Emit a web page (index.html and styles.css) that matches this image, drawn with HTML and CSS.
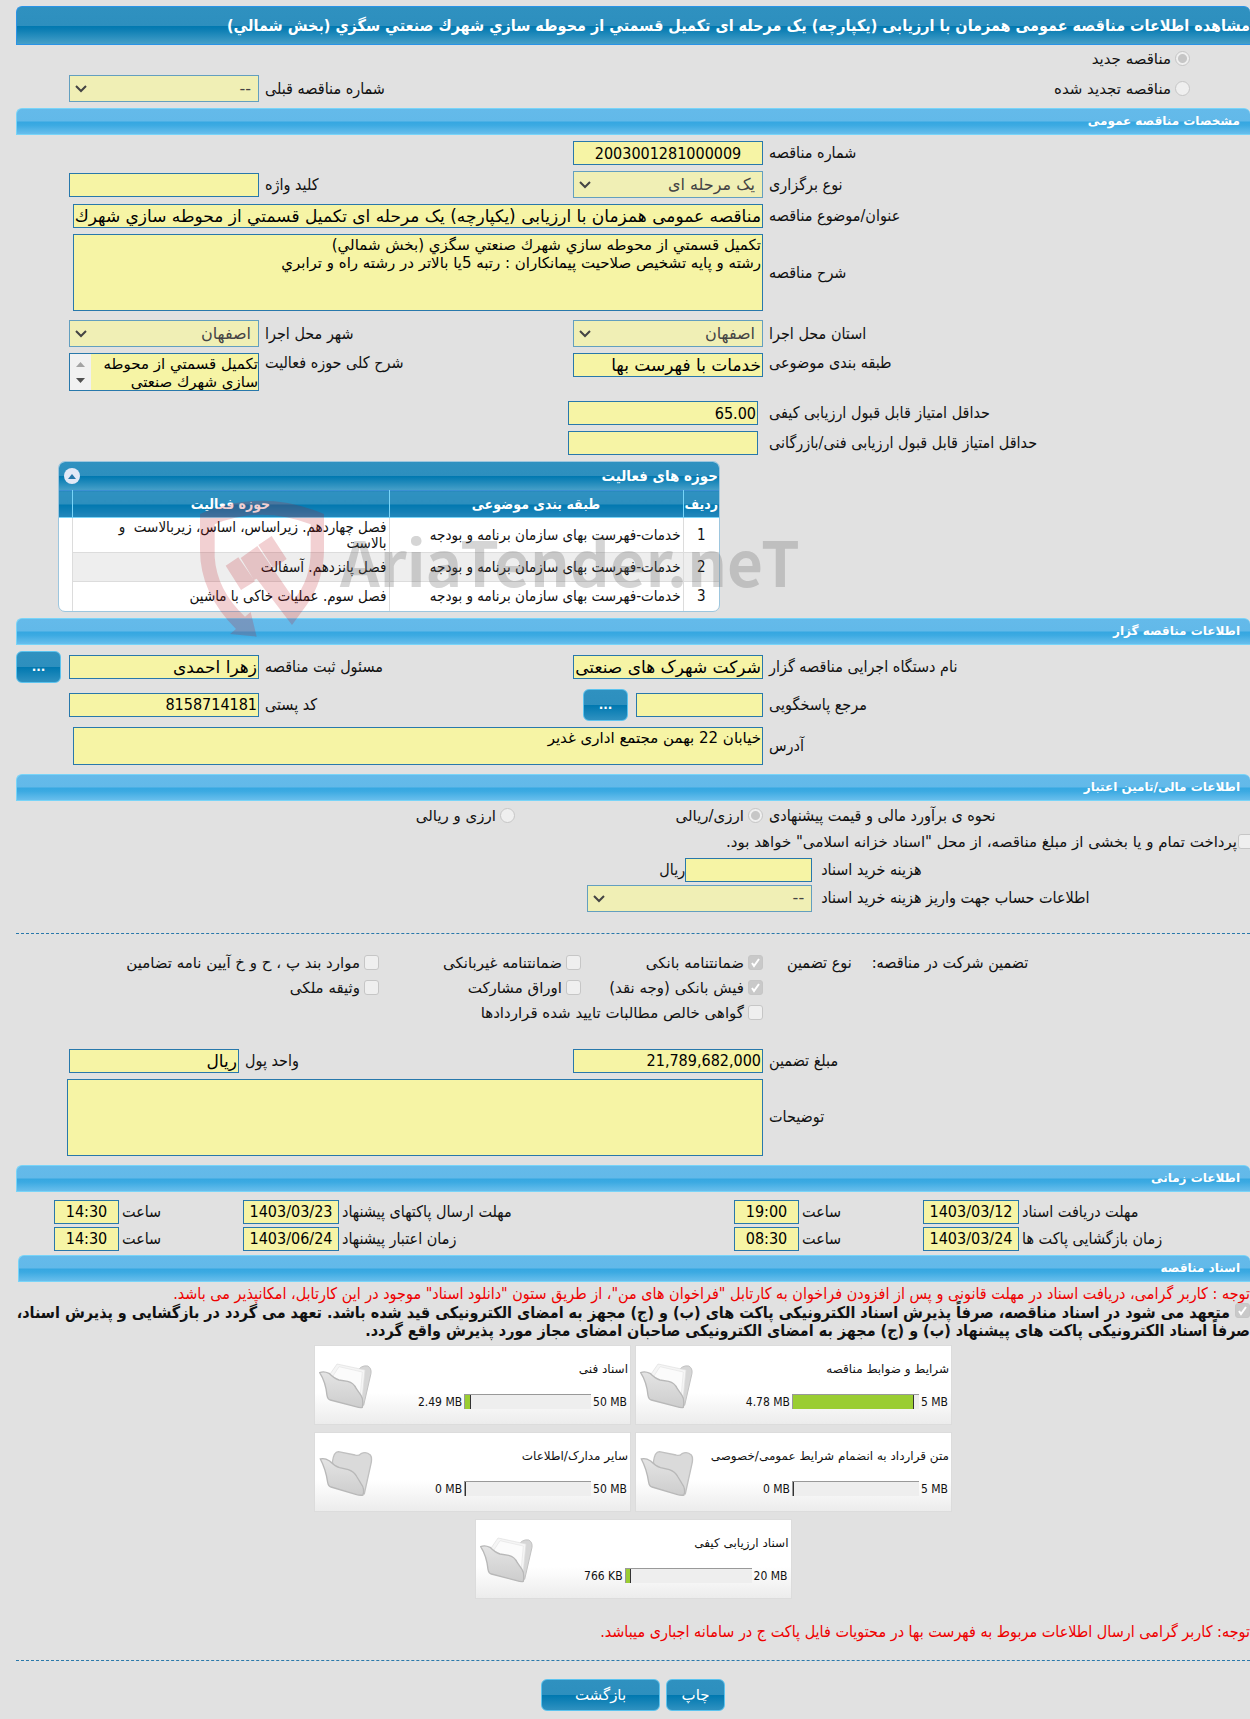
FILE: index.html
```html
<!DOCTYPE html>
<html lang="fa" dir="rtl">
<head>
  <meta charset="utf-8">
  <title>مشاهده اطلاعات مناقصه</title>
  <link rel="stylesheet" href="styles.css">
</head>
<body>

  <!-- folder icons used by the document cards -->
  <svg class="defs" width="0" height="0">
    <defs>
      <linearGradient id="folderFill" x1="0" y1="0" x2="0" y2="1">
        <stop offset="0" stop-color="#e4e4e4"/>
        <stop offset="1" stop-color="#cdcdcd"/>
      </linearGradient>
      <symbol id="folder-full" viewBox="0 0 162 144">
        <path d="M112 34 Q124 8 146 12 Q158 18 156 34 L134 130 L60 60 Z" fill="#d6d6d6" stroke="#c2c2c2" stroke-width="3"/>
        <path d="M32 38 L54 6 L138 24 L130 104 L110 96 Z" fill="#f5f5f5" stroke="#dedede" stroke-width="2"/>
        <path d="M42 42 L60 14 L130 30 L124 96" fill="#fbfbfb" stroke="#e4e4e4" stroke-width="2"/>
        <path d="M2 32 Q14 26 30 34 Q46 50 60 54 L86 58 Q104 62 112 80 L126 100 Q134 112 130 136 Q124 138 110 134 L34 114 Q26 112 24 100 Q20 60 2 32 Z" fill="url(#folderFill)" stroke="#b8b8b8" stroke-width="4"/>
      </symbol>
      <symbol id="folder-empty" viewBox="0 0 162 144">
        <path d="M40 40 Q44 8 58 8 L108 18 Q118 22 126 14 Q142 6 154 18 Q160 26 156 44 L136 134 L60 90 Z" fill="#dadada" stroke="#c0c0c0" stroke-width="4"/>
        <path d="M4 30 Q16 26 32 36 Q48 52 62 56 L88 62 Q106 68 114 84 L126 104 Q138 120 132 138 Q124 140 110 136 L36 114 Q28 112 26 100 Q20 60 4 30 Z" fill="url(#folderFill)" stroke="#b8b8b8" stroke-width="4"/>
      </symbol>
    </defs>
  </svg>

  <main class="page">
    <h1 class="title">مشاهده اطلاعات مناقصه عمومی همزمان با ارزیابی (یکپارچه) یک مرحله ای تکمیل قسمتي از محوطه سازي شهرك صنعتي سگزي (بخش شمالي)</h1>

    <div class="row top-row">
      <label class="choice"><input type="radio" name="kind" checked disabled>مناقصه جدید</label>
    </div>
    <div class="row top-row">
      <label class="choice"><input type="radio" name="kind" disabled>مناقصه تجدید شده</label>
      <span></span>
      <label class="lbl" for="prev">شماره مناقصه قبلی</label>
      <select id="prev" class="field" disabled><option>--</option></select>
    </div>

    <h2 class="bar">مشخصات مناقصه عمومی</h2>

    <div class="row">
      <label class="lbl" for="number">شماره مناقصه</label>
      <input id="number" class="field center" type="text" value="2003001281000009" readonly>
    </div>
    <div class="row">
      <label class="lbl" for="type">نوع برگزاری</label>
      <select id="type" class="field" disabled><option>یک مرحله ای</option></select>
      <label class="lbl" for="keyword">کلید واژه</label>
      <input id="keyword" class="field" type="text" readonly>
    </div>
    <div class="row">
      <label class="lbl" for="subject">عنوان/موضوع مناقصه</label>
      <div class="wide"><input id="subject" class="field strong" type="text" value="مناقصه عمومی همزمان با ارزیابی (یکپارچه) یک مرحله ای تکمیل قسمتي از محوطه سازي شهرك صنعتي سگزي (بخش شمالي)" readonly></div>
    </div>
    <div class="row">
      <label class="lbl" for="desc">شرح مناقصه</label>
      <div class="wide"><textarea id="desc" class="field tall" readonly>تکمیل قسمتي از محوطه سازي شهرك صنعتي سگزي (بخش شمالي)
رشته و پایه تشخیص صلاحیت پیمانکاران : رتبه 5یا بالاتر در رشته راه و ترابري</textarea></div>
    </div>
    <div class="row spaced">
      <label class="lbl" for="province">استان محل اجرا</label>
      <select id="province" class="field" disabled><option>اصفهان</option></select>
      <label class="lbl" for="city">شهر محل اجرا</label>
      <select id="city" class="field" disabled><option>اصفهان</option></select>
    </div>
    <div class="row top">
      <label class="lbl" for="category">طبقه بندی موضوعی</label>
      <input id="category" class="field strong" type="text" value="خدمات با فهرست بها" readonly>
      <label class="lbl" for="scope">شرح کلی حوزه فعالیت</label>
      <textarea id="scope" class="field scroller" readonly>تکمیل قسمتي از محوطه سازي شهرك صنعتي</textarea>
    </div>
    <div class="row spaced score">
      <label class="lbl" for="minq">حداقل امتیاز قابل قبول ارزیابی کیفی</label>
      <input id="minq" class="field" type="text" value="65.00" readonly>
    </div>
    <div class="row score">
      <label class="lbl" for="mint">حداقل امتیاز قابل قبول ارزیابی فنی/بازرگانی</label>
      <input id="mint" class="field" type="text" readonly>
    </div>

    <section class="grid-box">
      <div class="grid-head">
        <span>حوزه های فعالیت</span>
        <button class="collapse" type="button" aria-label="بستن"></button>
      </div>
      <table class="grid">
        <thead>
          <tr><th class="c-num">ردیف</th><th class="c-cat">طبقه بندی موضوعی</th><th>حوزه فعالیت</th><th class="c-end"></th></tr>
        </thead>
        <tbody>
          <tr class="two"><td class="num">1</td><td>خدمات-فهرست بهای سازمان برنامه و بودجه</td><td>فصل چهاردهم. زیراساس، اساس، زیربالاست &nbsp;و<br>بالاست</td><td></td></tr>
          <tr class="alt"><td class="num">2</td><td>خدمات-فهرست بهای سازمان برنامه و بودجه</td><td>فصل پانزدهم. آسفالت</td><td></td></tr>
          <tr><td class="num">3</td><td>خدمات-فهرست بهای سازمان برنامه و بودجه</td><td>فصل سوم. عملیات خاکی با ماشین</td><td></td></tr>
        </tbody>
      </table>
      <div class="watermark">
        <svg viewBox="0 0 420 450" width="140" height="150">
          <path d="M30 72 Q215 -8 402 72 V180 Q402 270 350 345 L306 405 L200 266 L192 270 L152 204 L202 168 L312 328 Q362 270 362 180 V103 Q215 45 74 103 V200 Q80 300 165 380 L182 366 L200 440 L120 432 L138 417 Q30 310 30 180 Z"/>
          <path d="M107 227 L145 202 L195 274 L153 300 Z M205 165 L245 138 L290 207 L250 235 Z"/>
        </svg>
        <span>AriaTender.neT</span>
      </div>
    </section>

    <h2 class="bar">اطلاعات مناقصه گزار</h2>

    <div class="row org">
      <label class="lbl" for="org">نام دستگاه اجرایی مناقصه گزار</label>
      <input id="org" class="field strong" type="text" value="شرکت شهرک های صنعتی" readonly>
      <label class="lbl" for="owner">مسئول ثبت مناقصه</label>
      <div class="with-btn"><input id="owner" class="field strong" type="text" value="زهرا احمدی" readonly><button class="btn dots" type="button">...</button></div>
    </div>
    <div class="row org">
      <label class="lbl" for="contact">مرجع پاسخگویی</label>
      <div class="with-btn"><input id="contact" class="field mid" type="text" readonly><button class="btn dots" type="button">...</button></div>
      <label class="lbl" for="postal">کد پستی</label>
      <input id="postal" class="field" type="text" value="8158714181" readonly>
    </div>
    <div class="row">
      <label class="lbl" for="address">آدرس</label>
      <div class="wide"><textarea id="address" class="field short" readonly>خیابان 22 بهمن مجتمع اداری غدیر</textarea></div>
    </div>

    <h2 class="bar after-area">اطلاعات مالی/تامین اعتبار</h2>

    <div class="row money">
      <span class="lbl">نحوه ی برآورد مالی و قیمت پیشنهادی</span>
      <div class="wide radios">
        <label class="choice"><input type="radio" name="currency" checked disabled>ارزی/ریالی</label>
        <label class="choice"><input type="radio" name="currency" disabled>ارزی و ریالی</label>
      </div>
    </div>
    <label class="choice treasury"><input type="checkbox" disabled>پرداخت تمام و یا بخشی از مبلغ مناقصه، از محل "اسناد خزانه اسلامی" خواهد بود.</label>
    <div class="cost">
      <label class="lbl" for="price">هزینه خرید اسناد</label>
      <div class="with-unit"><input id="price" class="field mid" type="text" readonly>ریال</div>
      <label class="lbl" for="account">اطلاعات حساب جهت واریز هزینه خرید اسناد</label>
      <select id="account" class="field" disabled><option>--</option></select>
    </div>

    <hr>

    <div class="guarantee">
      <div class="heads"><span>تضمین شرکت در مناقصه:</span><span>نوع تضمین</span></div>
      <div class="checks">
        <label class="choice"><input type="checkbox" checked disabled>ضمانتنامه بانکی</label>
        <label class="choice"><input type="checkbox" disabled>ضمانتنامه غیربانکی</label>
        <label class="choice"><input type="checkbox" disabled>موارد بند پ ، ح و خ آیین نامه تضامین</label>
        <label class="choice"><input type="checkbox" checked disabled>فیش بانکی (وجه نقد)</label>
        <label class="choice"><input type="checkbox" disabled>اوراق مشارکت</label>
        <label class="choice"><input type="checkbox" disabled>وثیقه ملکی</label>
        <label class="choice long"><input type="checkbox" disabled>گواهی خالص مطالبات تایید شده قراردادها</label>
      </div>
    </div>

    <div class="row amount">
      <label class="lbl" for="amount">مبلغ تضمین</label>
      <input id="amount" class="field" type="text" value="21,789,682,000" readonly>
      <div class="unit">
        <label class="lbl" for="unit">واحد پول</label>
        <input id="unit" class="field strong" type="text" value="ریال" readonly>
      </div>
    </div>
    <div class="row">
      <label class="lbl" for="notes">توضیحات</label>
      <div class="wide notes"><textarea id="notes" class="field tall" readonly></textarea></div>
    </div>

    <h2 class="bar after-area">اطلاعات زمانی</h2>

    <div class="times">
      <label class="lbl" for="d1">مهلت دریافت اسناد</label><input id="d1" class="field center" type="text" value="1403/03/12" readonly>
      <label class="lbl" for="t1">ساعت</label><input id="t1" class="field center" type="text" value="19:00" readonly>
      <label class="lbl" for="d2">مهلت ارسال پاکتهای پیشنهاد</label><input id="d2" class="field center" type="text" value="1403/03/23" readonly>
      <label class="lbl" for="t2">ساعت</label><input id="t2" class="field center" type="text" value="14:30" readonly>
      <label class="lbl" for="d3">زمان بازگشایی پاکت ها</label><input id="d3" class="field center" type="text" value="1403/03/24" readonly>
      <label class="lbl" for="t3">ساعت</label><input id="t3" class="field center" type="text" value="08:30" readonly>
      <label class="lbl" for="d4">زمان اعتبار پیشنهاد</label><input id="d4" class="field center" type="text" value="1403/06/24" readonly>
      <label class="lbl" for="t4">ساعت</label><input id="t4" class="field center" type="text" value="14:30" readonly>
    </div>

    <h2 class="bar docs">اسناد مناقصه</h2>

    <p class="note">توجه : کاربر گرامی، دریافت اسناد در مهلت قانونی و پس از افزودن فراخوان به کارتابل "فراخوان های من"، از طریق ستون "دانلود اسناد" موجود در این کارتابل، امکانپذیر می باشد.</p>
    <label class="pledge"><input type="checkbox" checked disabled> متعهد می شود در اسناد مناقصه، صرفاً پذیرش اسناد الکترونیکی پاکت های (ب) و (ج) مجهز به امضای الکترونیکی قید شده باشد. تعهد می گردد در بازگشایی و پذیرش اسناد، صرفاً اسناد الکترونیکی پاکت های پیشنهاد (ب) و (ج) مجهز به امضای الکترونیکی صاحبان امضای مجاز مورد پذیرش واقع گردد.</label>

    <div class="cards">
      <article class="card">
        <svg class="folder"><use href="#folder-full"/></svg>
        <h3>شرایط و ضوابط مناقصه</h3>
        <div class="usage"><span>4.78 MB</span><div class="meter"><i style="width: 96%"></i></div><span>5 MB</span></div>
      </article>
      <article class="card">
        <svg class="folder"><use href="#folder-full"/></svg>
        <h3>اسناد فنی</h3>
        <div class="usage"><span>2.49 MB</span><div class="meter"><i style="width: 5%"></i></div><span>50 MB</span></div>
      </article>
      <article class="card">
        <svg class="folder"><use href="#folder-empty"/></svg>
        <h3>متن قرارداد به انضمام شرایط عمومی/خصوصی</h3>
        <div class="usage"><span>0 MB</span><div class="meter"><i style="width: 0%"></i></div><span>5 MB</span></div>
      </article>
      <article class="card">
        <svg class="folder"><use href="#folder-empty"/></svg>
        <h3>سایر مدارک/اطلاعات</h3>
        <div class="usage"><span>0 MB</span><div class="meter"><i style="width: 0%"></i></div><span>50 MB</span></div>
      </article>
      <article class="card">
        <svg class="folder"><use href="#folder-full"/></svg>
        <h3>اسناد ارزیابی کیفی</h3>
        <div class="usage"><span>766 KB</span><div class="meter"><i style="width: 4%"></i></div><span>20 MB</span></div>
      </article>
    </div>

    <p class="note last">توجه: کاربر گرامی ارسال اطلاعات مربوط به فهرست بها در محتویات فایل پاکت ج در سامانه اجباری میباشد.</p>

    <hr class="end">

    <div class="actions">
      <button class="btn print" type="button">چاپ</button>
      <button class="btn back" type="button">بازگشت</button>
    </div>
  </main>

</body>
</html>
```
FILE: styles.css
```css
* {
  box-sizing: border-box;
}

body {
  margin: 0;
  background: #e1e1e1;
  color: #111;
  font-family: "DejaVu Sans Condensed", "DejaVu Sans", sans-serif;
  font-size: 16px;
  line-height: 18px;
}

.defs {
  position: absolute;
}

.page {
  padding: 6px 0 6px 16px;
}

h1, h2, h3, p {
  margin: 0;
}

/* headings */
.title {
  height: 39px;
  line-height: 37px;
  border: 1px solid #2a93e6;
  border-right: 0;
  border-radius: 6px 6px 0 0;
  background: linear-gradient(#2f91c0, #2d8fbe 50%, #0078b0 51%, #0a7db3 60%, #469fc8);
  color: #fff;
  font-size: 16px;
  white-space: nowrap;
  overflow: hidden;
}

.bar {
  height: 27px;
  margin-top: 6px;
  padding-right: 10px;
  border: 1px solid #78d4f8;
  border-right: 0;
  border-radius: 6px 6px 0 0;
  background: linear-gradient(#64baea, #62b9e9 48%, #35a7e1 52%, #3caae2 65%, #68beec);
  color: #fff;
  font-family: "DejaVu Sans", sans-serif;
  font-size: 12px;
  line-height: 25px;
}

.bar.after-area {
  margin-top: 9px;
}

/* form rows: label, field, label, field */
.row {
  display: grid;
  grid-template-columns: 481fr 190px 302fr 243px;
  column-gap: 6px;
  align-items: center;
  margin-top: 6px;
}

.row.spaced {
  margin-top: 9px;
}

.row.top {
  align-items: start;
}

.row.top .lbl {
  padding-top: 1px;
}

.lbl {
  text-align: left;
  white-space: nowrap;
}

.wide {
  grid-column: 2 / 5;
  padding-left: 57px;
}

.wide.notes {
  padding-left: 51px;
}

.top-row {
  margin-top: 3px;
  min-height: 27px;
}

.title + .top-row {
  margin-top: 0;
}

.top-row .choice {
  padding-right: 60px;
}

/* fields */
.field {
  display: block;
  width: 190px;
  height: 24px;
  margin: 0;
  padding: 0 1px;
  border: 1px solid #2878ab;
  border-radius: 0;
  background: #f6f4a5;
  color: #000;
  font-family: "DejaVu Sans Condensed", "DejaVu Sans", sans-serif;
  font-size: 16px;
  line-height: 22px;
  outline: none;
}

.wide .field {
  width: 100%;
}

.center {
  text-align: center;
}

.field.strong {
  font-family: "DejaVu Sans", sans-serif;
  font-size: 17px;
}

select.field {
  height: 27px;
  padding: 0 7px;
  appearance: none;
  border-color: #639fbf;
  background: #f0efb5 url("data:image/svg+xml,%3Csvg xmlns='http://www.w3.org/2000/svg' width='12' height='8'%3E%3Cpath d='M1 1 L6 6 L11 1' fill='none' stroke='%23444' stroke-width='2'/%3E%3C/svg%3E") no-repeat 5px 9px;
  color: #444;
  font-family: "DejaVu Sans", sans-serif;
  opacity: 1;
}

textarea.field {
  padding: 1px;
  font-family: "DejaVu Sans", sans-serif;
  font-size: 15px;
  line-height: 18px;
  resize: none;
  overflow: hidden;
}

textarea.tall {
  height: 77px;
}

textarea.short {
  height: 38px;
}

textarea.scroller {
  height: 38px;
  padding: 1px 0 0 22px;
  background: url("data:image/svg+xml,%3Csvg xmlns='http://www.w3.org/2000/svg' width='21' height='36'%3E%3Crect width='21' height='36' fill='%23f1f1f1'/%3E%3Cpath d='M6 13 L10.500 8 L15 13Z' fill='%23a3a3a3'/%3E%3Cpath d='M6 24 L10.500 29 L15 24Z' fill='%23505050'/%3E%3C/svg%3E") no-repeat left top, #f6f4a5;
}

.mid,
.with-btn .mid {
  width: 127px;
}

.score .field {
  margin-right: 5px;
}

.row.spaced.score {
  margin-top: 10px;
}

/* radios and tick boxes */
.choice {
  display: flex;
  align-items: center;
  gap: 4px;
  font-family: "DejaVu Sans", sans-serif;
  font-size: 15px;
  white-space: nowrap;
}

input[type="radio"],
input[type="checkbox"] {
  flex: none;
  appearance: none;
  width: 15px;
  height: 15px;
  margin: 0;
  border: 1px solid #c6c6c6;
  background: #efefef;
}

input[type="radio"] {
  border-radius: 50%;
}

input[type="checkbox"] {
  border-radius: 3px;
}

input[type="radio"]:checked {
  background: radial-gradient(circle, #c6c6c6 4px, #efefef 5px);
}

input[type="checkbox"]:checked {
  background: #c9c9c9 url("data:image/svg+xml,%3Csvg xmlns='http://www.w3.org/2000/svg' width='13' height='13'%3E%3Cpath d='M3 7 L5 10 L10 3' fill='none' stroke='%23fff' stroke-width='2'/%3E%3C/svg%3E") no-repeat center;
}

/* activity grid */
.grid-box {
  position: relative;
  width: 662px;
  max-width: 100%;
  margin: 6px auto 0 42px;
  border: 1px solid #9dc6de;
  border-radius: 7px;
  background: #fff;
}

.grid-head {
  display: flex;
  align-items: center;
  justify-content: space-between;
  height: 28px;
  padding: 0 1px 0 5px;
  border-radius: 6px 6px 0 0;
  background: linear-gradient(#2f91c0, #2d8fbe 50%, #0078b0 51%, #469fc8);
  color: #fff;
  font-size: 15px;
  font-weight: bold;
}

.collapse {
  width: 16px;
  height: 16px;
  padding: 0;
  border: 0;
  border-radius: 50%;
  background: #e3e9f7 url("data:image/svg+xml,%3Csvg xmlns='http://www.w3.org/2000/svg' width='8' height='5'%3E%3Cpath d='M0 5 L4 0 L8 5Z' fill='%232878ab'/%3E%3C/svg%3E") no-repeat center;
}

.grid {
  width: 100%;
  table-layout: fixed;
  border-collapse: collapse;
  font-size: 15px;
  line-height: 16px;
}

.grid th {
  height: 27px;
  padding: 0;
  border-left: 1px solid #78d4f8;
  border-top: 1px solid #3b8fd2;
  border-bottom: 1px solid #78d4f8;
  background: linear-gradient(#2f91c0, #2d8fbe 48%, #0078b0 50%, #2487bb);
  color: #fff;
  font-size: 14px;
}

.grid td {
  height: 29px;
  padding: 0 2px;
  border-left: 1px solid #dcdcdc;
  border-bottom: 1px solid #dcdcdc;
}

.grid .two td {
  height: 35px;
}

.grid th:last-child,
.grid td:last-child {
  border-left: 0;
}

.grid td:last-child {
  border-bottom: 0;
  background: #fff;
}

.grid tbody tr:last-child td {
  border-bottom: 0;
  background: transparent;
}

.grid .alt td:not(:last-child) {
  background: #eee;
}

.grid .num {
  text-align: center;
}

.c-num { width: 36px; }
.c-cat { width: 294px; }
.c-end { width: 13px; }

.watermark {
  position: absolute;
  left: 131px;
  top: 28px;
  display: flex;
  direction: ltr;
  pointer-events: none;
}

.watermark svg {
  fill: rgba(190, 20, 30, 0.2);
}

.watermark span {
  margin-left: 10px;
  color: rgba(100, 100, 100, 0.27);
  font: bold 62px/140px "Noto Sans CJK SC", sans-serif;
  white-space: nowrap;
}

/* organiser */
.org {
  min-height: 32px;
}

.with-btn {
  display: flex;
  align-items: center;
  gap: 8px;
}

.btn {
  height: 32px;
  padding: 0;
  border: 1px solid #5cc3ee;
  border-radius: 6px;
  background: linear-gradient(#2f91c0, #2d8fbe 50%, #0078b0 51%, #2f91c0);
  color: #fff;
  font-family: "DejaVu Sans", sans-serif;
  font-size: 15px;
}

.dots {
  width: 45px;
  font-size: 12px;
  font-weight: bold;
}

/* money */
.radios {
  display: grid;
  grid-template-columns: 248px 1fr;
}

.treasury {
  gap: 1px;
  margin-top: 8px;
  margin-right: -3px;
}

.cost {
  display: grid;
  grid-template-columns: 432fr 802fr;
  column-gap: 9px;
  row-gap: 3px;
  align-items: center;
  margin-top: 7px;
}

.cost select {
  width: 225px;
}

.with-unit {
  display: flex;
  align-items: center;
}

hr {
  margin: 21px 0 0;
  border: 0;
  border-top: 1px dashed #2878ab;
}

.guarantee {
  display: grid;
  grid-template-columns: 481fr 190px 302fr 243px;
  column-gap: 6px;
  margin-top: 20px;
}

.heads {
  display: flex;
  justify-content: flex-end;
  gap: 20px;
  padding-left: 18px;
}

.checks {
  grid-column: 2 / 5;
  display: grid;
  grid-template-columns: 182px 202px 1fr;
  row-gap: 7px;
}

.checks .long {
  grid-column: 1 / 3;
}

.amount {
  margin-top: 27px;
}

.unit {
  grid-column: 3 / 5;
  display: flex;
  justify-content: flex-end;
  align-items: center;
  gap: 6px;
  padding-left: 53px;
}

.unit .field {
  width: 170px;
}

/* dates */
.times {
  display: grid;
  grid-template-columns: 231fr 96px 124fr 65px 395fr 96px 124fr 65px;
  row-gap: 3px;
  align-items: center;
  margin-top: 8px;
  padding-left: 38px;
}

.times .lbl {
  padding-left: 3px;
}

.times .field {
  width: 100%;
}

/* documents */
.docs {
  margin-top: 4px;
  margin-left: 2px;
}

.note {
  margin-top: 3px;
  color: #e00;
}

.pledge {
  display: block;
  font-weight: bold;
}

.pledge input {
  vertical-align: baseline;
}

.cards {
  display: flex;
  flex-wrap: wrap;
  justify-content: center;
  gap: 7px 4px;
  max-width: 640px;
  margin: 5px auto 0;
}

.card {
  display: grid;
  grid-template-columns: 1fr 54px;
  grid-template-rows: 38px 28px;
  width: 317px;
  height: 80px;
  padding: 4px 2px 4px 4px;
  border: 1px solid #dcdcdc;
  background: linear-gradient(#fff 60%, #ececec);
  font-size: 12px;
}

.card h3 {
  align-self: center;
  font-family: "DejaVu Sans", sans-serif;
  font-size: 12px;
  font-weight: normal;
}

.folder {
  grid-column: 2;
  grid-row: 1 / 3;
  width: 54px;
  height: 48px;
  margin-top: 12px;
}

.card h3,
.usage {
  grid-column: 1;
}

.usage {
  display: flex;
  direction: ltr;
  align-items: center;
  justify-content: flex-end;
  gap: 2px;
  padding-right: 1px;
}

.meter {
  width: 127px;
  height: 15px;
  border-top: 1px solid #999;
  border-left: 1px solid #999;
  background: #eee;
}

.meter i {
  display: block;
  height: 100%;
  border-right: 1px solid #333;
  background: #9acd32;
}

.last {
  margin-top: 24px;
}

.end {
  margin-top: 19px;
}

.actions {
  display: flex;
  justify-content: center;
  gap: 6px;
  margin-top: 18px;
}

.print {
  width: 59px;
}

.back {
  width: 119px;
}
```
